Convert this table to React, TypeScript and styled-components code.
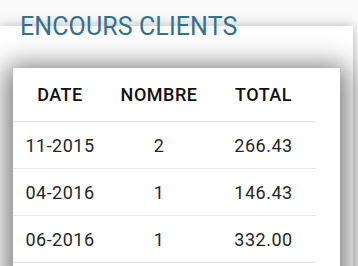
import React from 'react';
import styled, { createGlobalStyle } from 'styled-components';

const GlobalStyle = createGlobalStyle`
  html, body {
    margin: 0;
    padding: 0;
    background: #fafafa;
  }
  body {
    font-family: Roboto, "Liberation Sans", Arial, sans-serif;
  }
`;

const Page = styled.div`
  width: 358px;
  height: 266px;
  overflow: hidden;
  padding-top: 13px;
  box-sizing: border-box;
  background: #fafafa;
`;

const Title = styled.h2`
  position: relative;
  z-index: 2;
  margin: 0 0 0 20px;
  height: 13px;
  font-size: 25px;
  line-height: 28px;
  font-weight: 400;
  color: #31708f;
  letter-spacing: 0.1px;
`;

const Panel = styled.section`
  position: relative;
  z-index: 1;
  width: 353px;
  height: 260px;
  background: #fff;
  box-shadow: 0 0 12px rgba(0, 0, 0, 0.28);
  padding: 42px 0 0 13px;
  box-sizing: border-box;
`;

const Card = styled.div`
  width: 327px;
  height: 220px;
  background: #fff;
  box-shadow: 0 4px 26px 6px rgba(0, 0, 0, 0.55);
`;

const Table = styled.table`
  width: 303px;
  border-collapse: collapse;
  table-layout: fixed;
  font-size: 18px;
  letter-spacing: 0.5px;
`;

const HeadCell = styled.th<{ $w: number }>`
  width: ${p => p.$w}px;
  height: 53px;
  padding: 0;
  text-align: center;
  font-weight: 500;
  color: #111;
  border-bottom: 1px solid #e6e6e6;
`;

const Cell = styled.td`
  height: 46px;
  padding: 0;
  text-align: center;
  font-weight: 400;
  color: #262626;
  border-bottom: 1px solid #e6e6e6;
`;

const rows = [
  { date: '11-2015', nombre: 2, total: '266.43' },
  { date: '04-2016', nombre: 1, total: '146.43' },
  { date: '06-2016', nombre: 1, total: '332.00' },
];

export default function App() {
  return (
    <>
      <GlobalStyle />
      <Page>
        <Title>ENCOURS CLIENTS</Title>
        <Panel>
          <Card>
            <Table>
              <thead>
                <tr>
                  <HeadCell $w={94}>DATE</HeadCell>
                  <HeadCell $w={104}>NOMBRE</HeadCell>
                  <HeadCell $w={105}>TOTAL</HeadCell>
                </tr>
              </thead>
              <tbody>
                {rows.map(r => (
                  <tr key={r.date}>
                    <Cell>{r.date}</Cell>
                    <Cell>{r.nombre}</Cell>
                    <Cell>{r.total}</Cell>
                  </tr>
                ))}
              </tbody>
            </Table>
          </Card>
        </Panel>
      </Page>
    </>
  );
}
